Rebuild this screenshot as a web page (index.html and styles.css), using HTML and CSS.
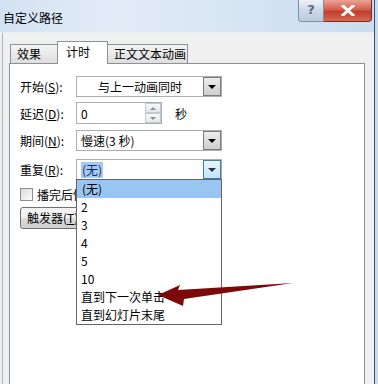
FILE: index.html
```html
<!DOCTYPE html>
<html lang="zh-CN">
<head>
  <meta charset="UTF-8" />
  <meta name="viewport" content="width=device-width, initial-scale=1.0"/>
  <title>自定义路径</title>
  <link rel="stylesheet" href="styles.css">
</head>
<body>

  <div class="window">
    <div class="titlebar">
      <span class="title">自定义路径</span>
      <div class="caption-btns">
        <span class="btn-help">?</span>
        <span class="btn-close">
          <svg width="14" height="11" viewBox="0 0 14 11"><path d="M2 1 L12 10 M12 1 L2 10" stroke="#fff" stroke-width="3" stroke-linecap="square"/></svg>
        </span>
      </div>
    </div>

    <div class="dialog">
      <div class="tabs">
        <div class="tab t1">效果</div>
        <div class="tab t2 active">计时</div>
        <div class="tab t3">正文文本动画</div>
      </div>

      <div class="panel">
        <div class="row r1">
          <label>开始(<u>S</u>):</label>
          <div class="select centered">与上一动画同时<span class="drop"></span></div>
        </div>

        <div class="row r2">
          <label>延迟(<u>D</u>):</label>
          <div class="input">0
            <span class="spin">
              <span class="spin-btn up"></span>
              <span class="spin-btn down"></span>
            </span>
          </div>
          <span class="unit">秒</span>
        </div>

        <div class="row r3">
          <label>期间(<u>N</u>):</label>
          <div class="select">慢速(3 秒)<span class="drop"></span></div>
        </div>

        <div class="row r4">
          <label>重复(<u>R</u>):</label>
          <div class="select open"><span class="sel-text">(无)</span><span class="drop hover"></span></div>
          <ul class="droplist">
            <li class="hl">(无)</li>
            <li>2</li>
            <li>3</li>
            <li>4</li>
            <li>5</li>
            <li>10</li>
            <li>直到下一次单击</li>
            <li>直到幻灯片末尾</li>
          </ul>
        </div>

        <div class="check-row">
          <span class="checkbox"></span>
          <span>播完后快退(<u>W</u>)</span>
        </div>

        <div class="btn-row">
          <span class="button">触发器(<u>T</u>)</span>
        </div>
      </div>
    </div>
  </div>

  <svg class="arrow" width="378" height="384" viewBox="0 0 378 384">
    <path d="M158 295 L180 285 L178 290 L293 283 L184 299 L183 306 Z" fill="#7d0a0a"/>
  </svg>

</body>
</html>
```

FILE: styles.css
```css
body {
  margin: 0;
  width: 378px;
  height: 384px;
  overflow: hidden;
  background: #c4dbf2;
  font-family: "Noto Sans CJK SC", "DejaVu Sans", sans-serif;
  font-size: 12px;
  color: #000;
  position: relative;
}
.window {
  width: 374px;
  height: 384px;
  overflow: hidden;
  border-right: 1px solid #4b4f55;
  background: #f0f0f0;
  display: flex;
  flex-direction: column;
}
.titlebar {
  height: 32px;
  flex: none;
  border-bottom: 1px solid #e6eef7;
  background: linear-gradient(90deg, #d3e2f2 0%, #e2ecf7 30%, #d8e5f3 60%, #cadcef 100%);
  display: flex;
  justify-content: space-between;
  align-items: flex-start;
}
.title {
  margin: 10px 0 0 3px;
  line-height: 16px;
}
.caption-btns {
  display: flex;
  margin-right: 2px;
}
.btn-help {
  width: 24px;
  height: 21px;
  border: 1px solid #7d8ea6;
  border-top: none;
  border-radius: 0 0 0 4px;
  background: linear-gradient(#edf2f8, #cbd7e6 50%, #bccbdd);
  color: #5a6b82;
  text-align: center;
  font-family: "DejaVu Sans", sans-serif;
  font-size: 13px;
  font-weight: bold;
  line-height: 20px;
}
.btn-close {
  width: 47px;
  height: 21px;
  border: 1px solid #7a2a22;
  border-top: none;
  border-left: none;
  border-radius: 0 0 4px 0;
  background: linear-gradient(#e8a495, #d5604e 45%, #c23d2b 55%, #d36a55);
  display: flex;
  align-items: center;
  justify-content: center;
}
.dialog {
  flex: 1;
  min-height: 0;
  overflow: hidden;
  margin-left: 2px;
  border-left: 1px solid #aab3be;
  padding: 8px 9px 0 6px;
  display: flex;
  flex-direction: column;
}
.tabs {
  display: flex;
  align-items: flex-end;
  height: 22px;
  flex: none;
  padding-left: 1px;
}
.tab {
  box-sizing: border-box;
  height: 19px;
  border: 1px solid #8d9096;
  border-bottom: none;
  background: linear-gradient(#f4f4f4, #dedede);
  line-height: 18px;
  padding-left: 6px;
}
.t1 { width: 47px; border-right: none; }
.t2 { width: 51px; padding-left: 8px; }
.t3 { width: 80px; border-left: none; padding-left: 6px; }
.tab.active {
  height: 23px;
  margin-bottom: -1px;
  background: #fff;
  position: relative;
  z-index: 1;
  line-height: 20px;
}
.panel {
  flex: 1;
  background: #fff;
  border: 1px solid #8d9096;
  border-bottom: none;
  padding: 12px 10px 0 10px;
}
.row {
  display: flex;
  align-items: center;
  position: relative;
}
.row label {
  width: 56px;
}
.r1 { height: 21px; }
.r2 { margin-top: 5px; height: 22px; }
.r3 { margin-top: 6px; height: 21px; }
.r4 { margin-top: 8px; height: 21px; }
.select {
  box-sizing: border-box;
  width: 146px;
  height: 100%;
  border: 1px solid #abadb3;
  background: #fff;
  display: flex;
  align-items: center;
  padding-left: 4px;
  position: relative;
}
.select.centered {
  justify-content: center;
  padding-right: 22px;
}
.drop {
  position: absolute;
  right: 0;
  top: 0;
  box-sizing: border-box;
  width: 18px;
  height: 19px;
  border: 1px solid #7c7c7c;
  background: linear-gradient(#ececec, #cfcfcf);
}
.drop::after {
  content: "";
  position: absolute;
  left: 4px;
  top: 7px;
  border-left: 4px solid transparent;
  border-right: 4px solid transparent;
  border-top: 4px solid #000;
}
.drop.hover {
  border-color: #3c7fb1;
  background: linear-gradient(#eaf6fd, #bee6fd);
}
.drop.hover::after {
  border-top-color: #333;
}
.sel-text {
  background: #a6c9ee;
  color: #0c2a6e;
  padding: 0 1px;
  line-height: 16px;
}
.input {
  box-sizing: border-box;
  width: 86px;
  height: 100%;
  border: 1px solid #abadb3;
  padding-left: 4px;
  display: flex;
  align-items: center;
  position: relative;
}
.spin {
  position: absolute;
  right: 0;
  top: 0;
  width: 16px;
  display: flex;
  flex-direction: column;
}
.spin-btn {
  box-sizing: border-box;
  height: 10px;
  border: 1px solid #c5c8cc;
  background: linear-gradient(#f7f7f7, #e6e6e6);
  position: relative;
}
.spin-btn::after {
  content: "";
  position: absolute;
  left: 4px;
  top: 3px;
  border-left: 3px solid transparent;
  border-right: 3px solid transparent;
}
.up::after { border-bottom: 3px solid #8a8f96; }
.down::after { border-top: 3px solid #8a8f96; }
.unit {
  margin-left: 13px;
}
.droplist {
  position: absolute;
  left: 56px;
  top: 20px;
  width: 146px;
  box-sizing: border-box;
  margin: 0;
  padding: 0;
  list-style: none;
  border: 1px solid #646464;
  background: #fff;
  z-index: 2;
}
.droplist li {
  height: 18px;
  line-height: 18px;
  padding-left: 4px;
}
.droplist li.hl {
  background: #99c5f3;
  padding-left: 5px;
}
.check-row {
  margin-top: 8px;
  height: 13px;
  display: flex;
  align-items: center;
  gap: 4px;
  white-space: nowrap;
}
.checkbox {
  box-sizing: border-box;
  width: 13px;
  height: 13px;
  border: 1px solid #8f8f8f;
  background: linear-gradient(135deg, #dcdcdc, #fbfbfb);
}
.btn-row {
  margin-top: 6px;
  white-space: nowrap;
}
.button {
  display: inline-block;
  box-sizing: border-box;
  height: 22px;
  line-height: 20px;
  padding: 0 6px;
  border: 1px solid #707070;
  border-radius: 3px;
  background: linear-gradient(#f2f2f2 50%, #dcdcdc 50%, #cfcfcf);
}
.arrow {
  position: absolute;
  left: 0;
  top: 0;
  z-index: 3;
  pointer-events: none;
}
```
